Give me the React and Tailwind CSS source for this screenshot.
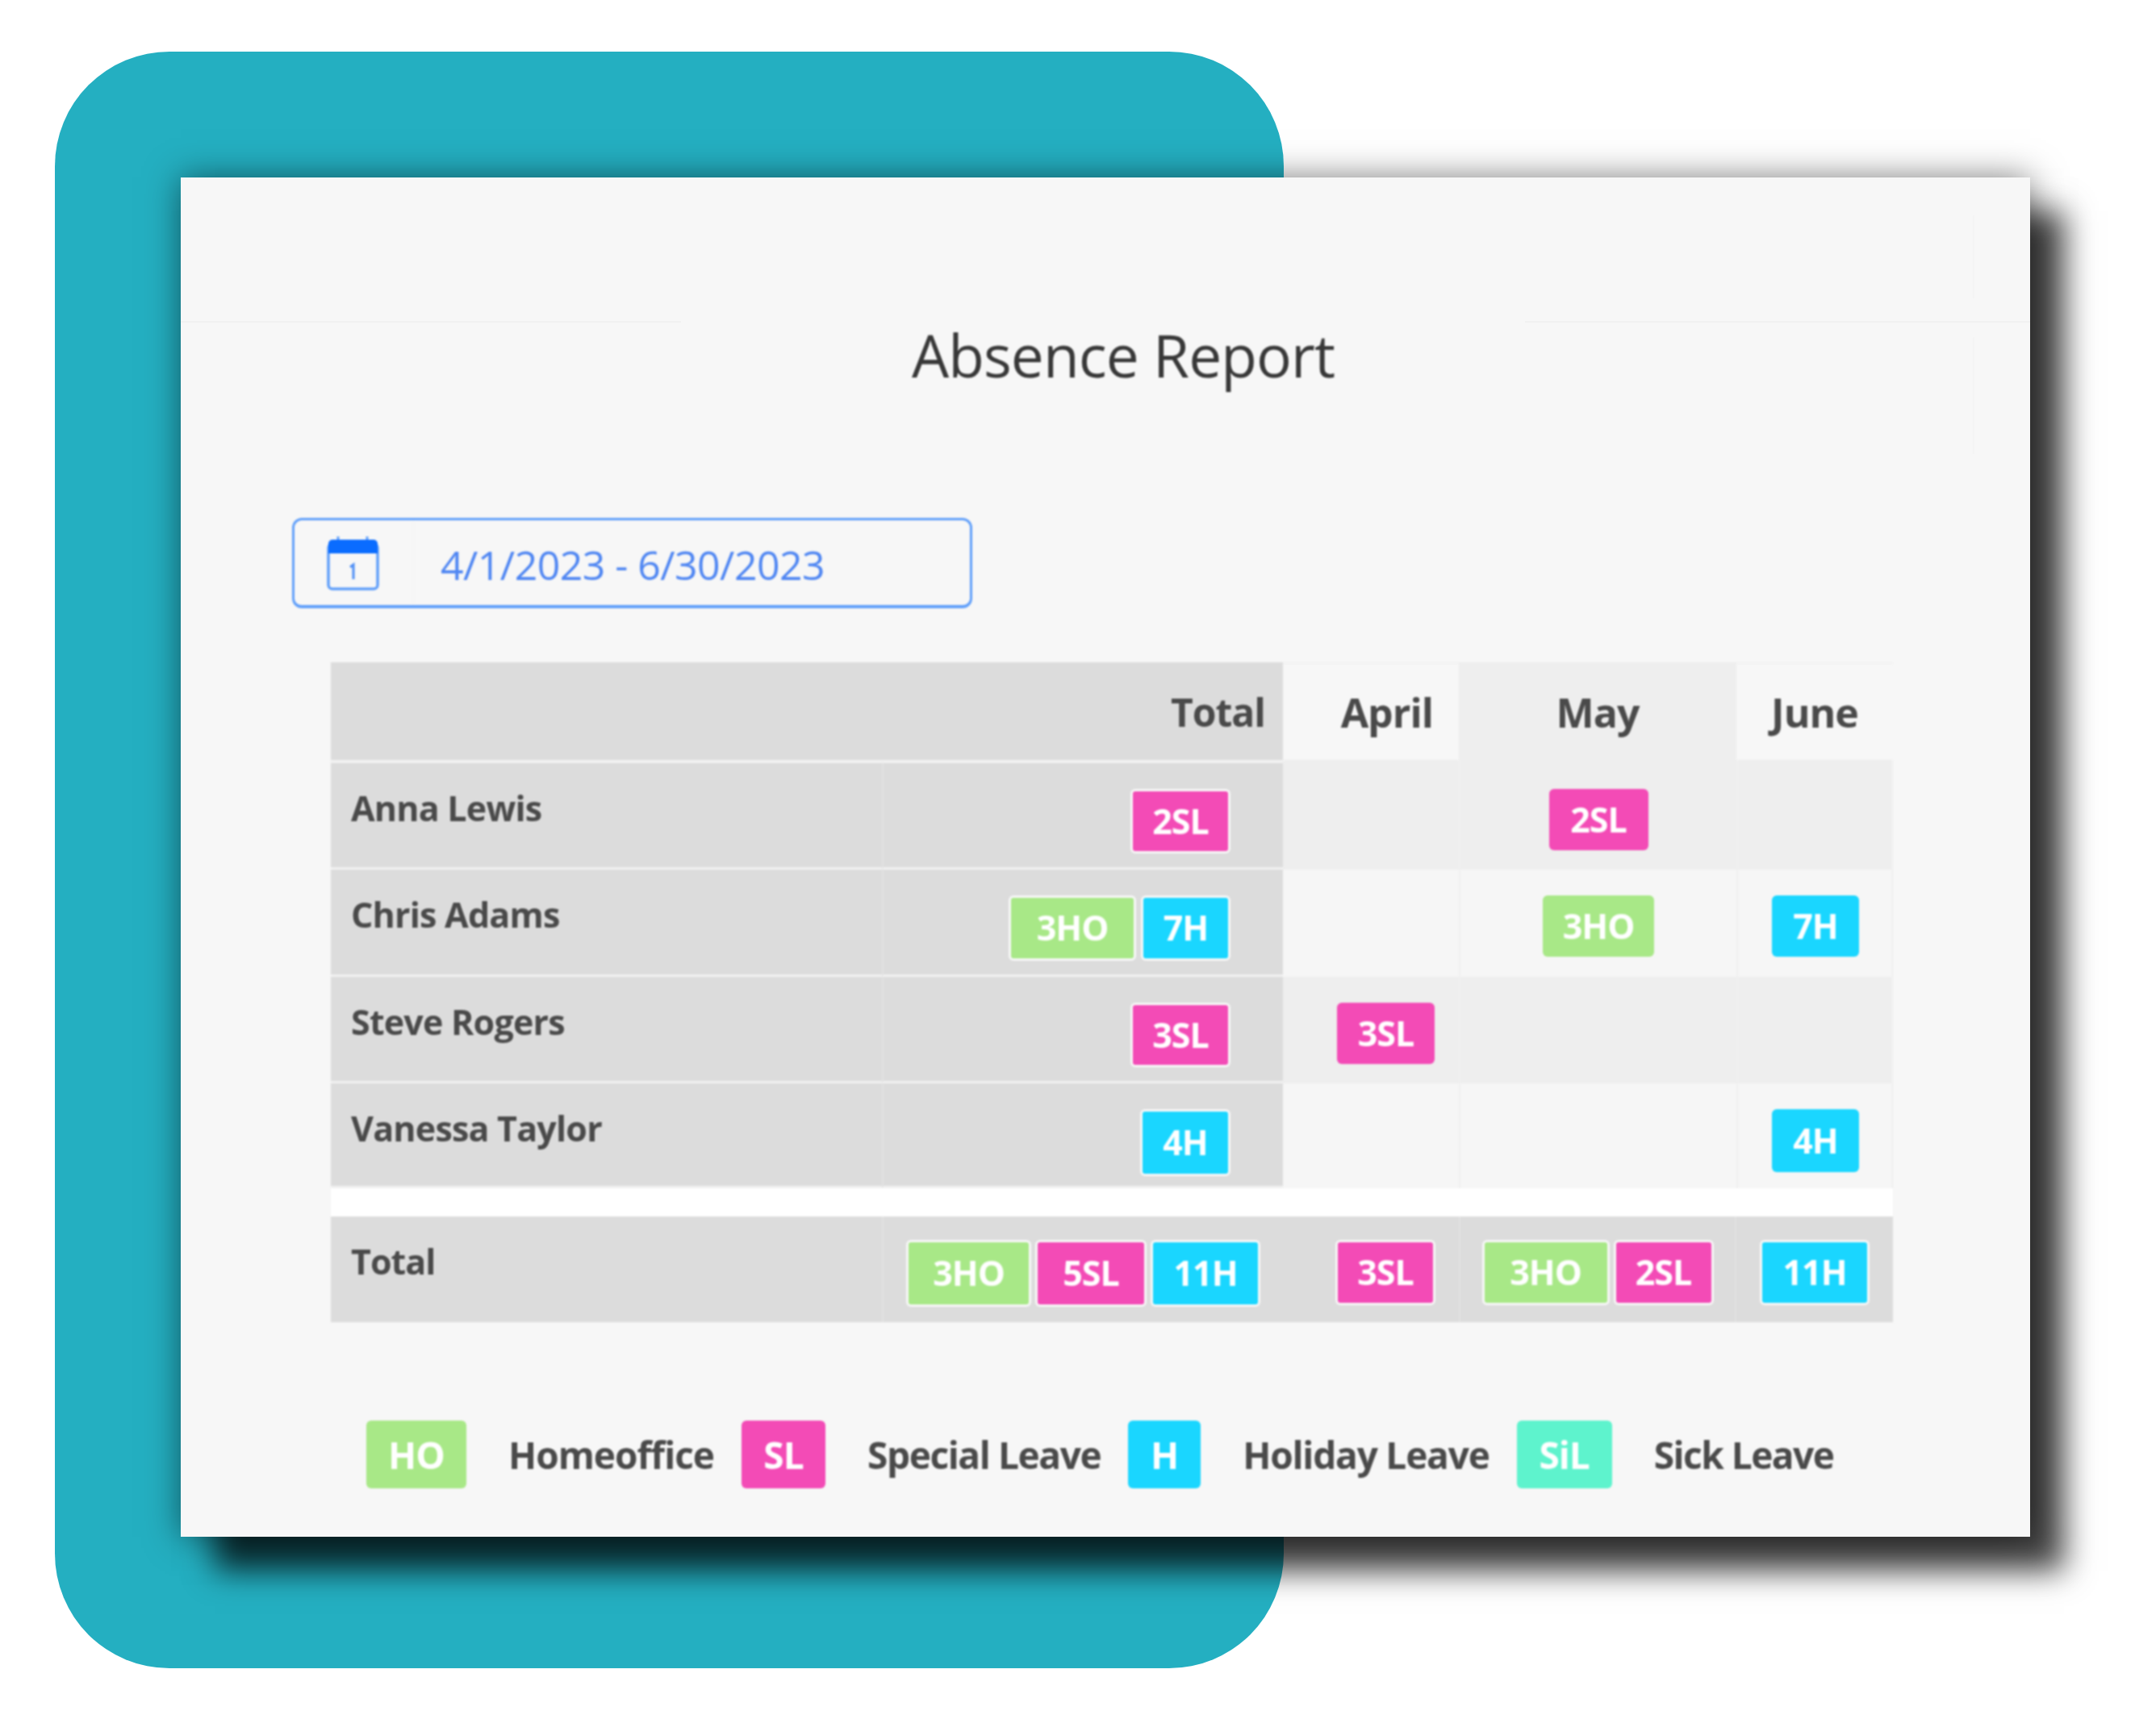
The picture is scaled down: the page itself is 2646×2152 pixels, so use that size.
const colors = {
  HO: "bg-[#a8e887]",
  SL: "bg-[#f34bb6]",
  H: "bg-[#1ad6ff]",
  SiL: "bg-[#5ef3cd]",
}

function Badge({ label, type, width, height = "h-[76px]", size = "text-[43px]", framed }) {
  return (
    <span
      className={`flex shrink-0 items-center justify-center rounded-[6px] font-bold tracking-[-1px] text-white ${size} ${colors[type]} ${width} ${height} ${
        framed ? "border-[3px] border-[#f7f7f7]" : ""
      }`}
    >
      {label}
    </span>
  )
}

function CalendarIcon() {
  return (
    <svg viewBox="0 0 65 68" className="h-[68px] w-[65px]" fill="none">
      <rect x="2" y="10" width="61" height="56" rx="5" stroke="#62a0fa" strokeWidth="3.5" />
      <path d="M2 22V10a5 5 0 0 1 5-5h51a5 5 0 0 1 5 5v12z" fill="#0a6cff" />
      <path d="M14 5V1M50 5V1" stroke="#62a0fa" strokeWidth="3" />
      <path d="M29 39l4-3v18" stroke="#4f8ff5" strokeWidth="3" />
    </svg>
  )
}

const nameCell = "border-b-[3px] border-[#f1f1f1] bg-[#dcdcdc] pl-[25px] pt-[24px] text-[43px] font-bold leading-[64px] tracking-[-0.8px] text-[#4a4a4a]"
const totalCell = "flex items-start justify-end gap-[6px] border-b-[3px] border-l-2 border-[#f1f1f1] border-l-[#e2e2e2] bg-[#dcdcdc] pr-[65px] pt-[32px]"
const monthHead = "text-[50px] font-bold tracking-[-1px]"

const rows = [
  {
    name: "Anna Lewis",
    bg: "bg-[#eeeeee]",
    top: "-mt-[4px] pt-[36px]",
    total: [<Badge key="a" label="2SL" type="SL" width="w-[124px]" height="h-[80px]" framed />],
    may: [<Badge key="a" label="2SL" type="SL" width="w-[123px]" />],
  },
  {
    name: "Chris Adams",
    bg: "bg-[#f6f6f6]",
    top: "pt-[32px]",
    total: [
      <Badge key="a" label="3HO" type="HO" width="w-[158px]" height="h-[81px]" framed />,
      <Badge key="b" label="7H" type="H" width="w-[111px]" height="h-[81px]" framed />,
    ],
    may: [<Badge key="a" label="3HO" type="HO" width="w-[138px]" />],
    june: [<Badge key="a" label="7H" type="H" width="w-[108px]" />],
  },
  {
    name: "Steve Rogers",
    bg: "bg-[#eeeeee]",
    top: "pt-[32px]",
    total: [<Badge key="a" label="3SL" type="SL" width="w-[124px]" height="h-[80px]" framed />],
    april: [<Badge key="a" label="3SL" type="SL" width="w-[121px]" />],
  },
  {
    name: "Vanessa Taylor",
    bg: "bg-[#f6f6f6]",
    top: "pt-[32px]",
    total: [<Badge key="a" label="4H" type="H" width="w-[112px]" height="h-[83px]" framed />],
    june: [<Badge key="a" label="4H" type="H" width="w-[108px]" height="h-[78px]" />],
  },
]

const legend = [
  { label: "HO", type: "HO", width: "w-[124px]", text: "Homeoffice", track: "tracking-[-1px]", gap: "mr-[34px]" },
  { label: "SL", type: "SL", width: "w-[104px]", text: "Special Leave", track: "tracking-[-1.4px]", gap: "mr-[34px]" },
  { label: "H", type: "H", width: "w-[90px]", text: "Holiday Leave", track: "tracking-[-1.2px]", gap: "mr-[34px]" },
  { label: "SiL", type: "SiL", width: "w-[118px]", text: "Sick Leave", track: "tracking-[-1.5px]", gap: "" },
]

export default function App() {
  return (
    <div className="h-[2152px] w-[2646px] overflow-hidden bg-white pl-[68px] pt-[64px] font-['Open_Sans',sans-serif]">
      <div className="h-[2004px] w-[1523px] rounded-[142px] bg-[#24afc1] pl-[156px] pt-[156px]">
        <div className="relative flex h-[1685px] w-[2292px] flex-col bg-[#f7f7f7] shadow-[42px_42px_36px_rgba(0,0,0,0.75),0_0_40px_rgba(0,0,0,0.5)]">
          <div className="absolute left-0 top-[178px] h-[2px] w-[620px] bg-[#f1f1f1]" />
          <div className="absolute left-[1666px] right-0 top-[178px] h-[2px] bg-[#f1f1f1]" />
          <div className="absolute left-[2221px] top-[47px] h-[103px] w-[2px] bg-[#f4f4f4]" />
          <div className="absolute left-[2221px] top-[198px] h-[145px] w-[2px] bg-[#f4f4f4]" />

          <div className="flex flex-col blur-[1.3px]">
            <h1 className="pl-[44px] pt-[172px] text-center text-[73px] font-medium leading-[96px] tracking-[-0.9px] text-[#383838]">
              Absence Report
            </h1>

            <div className="ml-[138px] mt-[154px] flex h-[112px] w-[843px] items-center rounded-[12px] border-[3px] border-b-4 border-[#62a0fa]">
              <div className="flex h-full w-[148px] items-center border-r-2 border-[#f5f5f5] pl-[40px]">
                <CalendarIcon />
              </div>
              <span className="ml-[33px] pt-[6px] text-[50px] tracking-[-0.55px] text-[#4f86f2]">4/1/2023 - 6/30/2023</span>
            </div>

            <div className="ml-[186px] mt-[67px] grid w-[1936px] grid-cols-[683px_497px_218px_344px_194px] grid-rows-[125px_132px_133px_132px_130px_35px_131px] text-[#4a4a4a]">
              <div className="border-b-[4px] border-[#f1f1f1] bg-[#dcdcdc]" />
              <div className="flex items-center justify-end border-b-[4px] border-[#f1f1f1] bg-[#dcdcdc] pr-[22px] pt-[2px] text-[48px] font-bold tracking-[-1px]">Total</div>
              <div className={`flex items-center justify-end border-t-2 border-[#f1f1f1] pb-[2px] pr-[32px] ${monthHead}`}>April</div>
              <div className={`flex items-center justify-center bg-[#eeeeee] ${monthHead}`}>May</div>
              <div className={`flex items-center justify-center border-t-2 border-[#f1f1f1] pb-[2px] ${monthHead}`}>June</div>

              {rows.map((row) => (
                <div key={row.name} className="contents">
                  <div className={nameCell}>{row.name}</div>
                  <div className={totalCell}>{row.total}</div>
                  <div className={`flex items-start justify-end pr-[30px] ${row.top} ${row.bg}`}>{row.april}</div>
                  <div className={`flex items-start justify-center border-l-2 border-[#f0f0f0] ${row.top} ${row.bg}`}>{row.may}</div>
                  <div className={`flex items-start justify-center border-x-2 border-[#f0f0f0] pl-[2px] ${row.top} ${row.bg}`}>{row.june}</div>
                </div>
              ))}

              <div className="col-span-5 bg-white" />

              <div className="bg-[#dcdcdc] pl-[25px] pt-[24px] text-[43px] font-bold leading-[64px] tracking-[-1px]">Total</div>
              <div className="flex items-start justify-end gap-[5px] border-l-2 border-[#e2e2e2] bg-[#dcdcdc] pr-[28px] pt-[29px]">
                <Badge label="3HO" type="HO" width="w-[155px]" height="h-[83px]" framed />
                <Badge label="5SL" type="SL" width="w-[138px]" height="h-[83px]" framed />
                <Badge label="11H" type="H" width="w-[136px]" height="h-[83px]" framed />
              </div>
              <div className="flex items-start justify-end bg-[#dcdcdc] pr-[29px] pt-[29px]">
                <Badge label="3SL" type="SL" width="w-[124px]" height="h-[81px]" framed />
              </div>
              <div className="flex items-start justify-center gap-[5px] border-x-2 border-[#e2e2e2] bg-[#dcdcdc] pt-[29px]">
                <Badge label="3HO" type="HO" width="w-[158px]" height="h-[81px]" framed />
                <Badge label="2SL" type="SL" width="w-[124px]" height="h-[81px]" framed />
              </div>
              <div className="flex items-start justify-center bg-[#dcdcdc] pt-[29px]">
                <Badge label="11H" type="H" width="w-[136px]" height="h-[81px]" framed />
              </div>
            </div>

            <div className="ml-[230px] mt-[122px] flex items-center">
              {legend.map((item) => (
                <div key={item.label} className={`flex items-center ${item.gap}`}>
                  <Badge label={item.label} type={item.type} width={item.width} height="h-[84px]" size="text-[46px]" />
                  <span className={`ml-[52px] text-[46px] font-bold text-[#4a4a4a] ${item.track}`}>{item.text}</span>
                </div>
              ))}
            </div>
          </div>
        </div>
      </div>
    </div>
  )
}
